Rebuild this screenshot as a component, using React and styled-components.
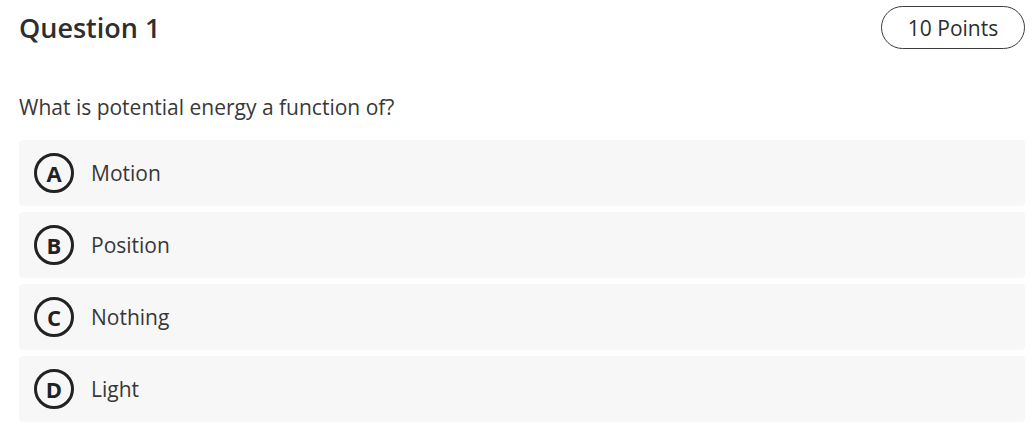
import React from 'react';
import styled, { createGlobalStyle } from 'styled-components';

const GlobalStyle = createGlobalStyle`
  html, body {
    margin: 0;
    padding: 0;
    background: #fff;
  }
  body {
    font-family: "Open Sans", "Noto Sans", sans-serif;
    color: #333;
  }
`;

const Page = styled.main`
  padding: 6px 7px 0 19px;
`;

const Header = styled.header`
  display: flex;
  justify-content: space-between;
  align-items: center;
  height: 43px;
`;

const Title = styled.h1`
  margin: 0;
  font-size: 27px;
  font-weight: 600;
  color: #2e2e2e;
`;

const PointsPill = styled.span`
  display: inline-flex;
  align-items: center;
  justify-content: center;
  width: 142px;
  height: 41px;
  border: 1px solid #3a3a3a;
  border-radius: 22px;
  font-size: 21px;
  color: #2e2e2e;
`;

const Prompt = styled.p`
  margin: 44px 0 0;
  font-size: 21px;
  line-height: 28px;
  color: #383838;
`;

const OptionList = styled.ul`
  list-style: none;
  margin: 19px 0 0;
  padding: 0;
  display: flex;
  flex-direction: column;
  gap: 6px;
`;

const Option = styled.li`
  display: flex;
  align-items: center;
  gap: 17px;
  height: 66px;
  padding: 0 15px;
  background: #f7f7f7;
  border-radius: 4px;
  font-size: 21px;
  color: #383838;
`;

const Letter = styled.span`
  display: inline-flex;
  align-items: center;
  justify-content: center;
  box-sizing: border-box;
  width: 40px;
  height: 40px;
  border: 3px solid #222;
  border-radius: 50%;
  font-size: 22px;
  font-weight: 700;
  color: #222;
`;

const options = [
  { key: 'A', label: 'Motion' },
  { key: 'B', label: 'Position' },
  { key: 'C', label: 'Nothing' },
  { key: 'D', label: 'Light' },
];

const App = () => (
  <>
    <GlobalStyle />
    <Page>
      <Header>
        <Title>Question 1</Title>
        <PointsPill>10 Points</PointsPill>
      </Header>
      <Prompt>What is potential energy a function of?</Prompt>
      <OptionList>
        {options.map((opt) => (
          <Option key={opt.key}>
            <Letter>{opt.key}</Letter>
            <span>{opt.label}</span>
          </Option>
        ))}
      </OptionList>
    </Page>
  </>
);

export default App;
